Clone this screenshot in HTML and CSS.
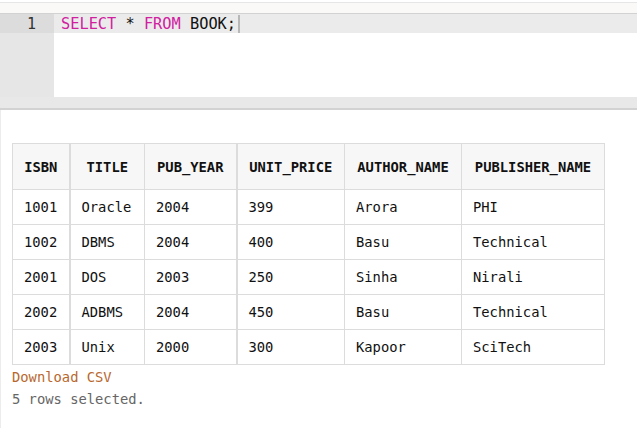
FILE: index.html
```html
<!DOCTYPE html>
<html>
<head>
<meta charset="utf-8">
<link rel="stylesheet" href="styles.css">
</head>
<body>
<div class="topbar"></div>
<div class="editor">
  <div class="gutter"><div class="ln active">1</div></div>
  <div class="code">
    <div class="line active"><span class="kw">SELECT</span> * <span class="kw">FROM</span> BOOK;<span class="cursor"></span></div>
  </div>
</div>
<div class="hscroll"></div>
<div class="results">
  <table class="grid">
    <colgroup>
      <col class="c1"><col class="c2"><col class="c3"><col class="c4"><col class="c5"><col class="c6">
    </colgroup>
    <thead>
      <tr><th>ISBN</th><th class="thick">TITLE</th><th>PUB_YEAR</th><th class="thick">UNIT_PRICE</th><th>AUTHOR_NAME</th><th>PUBLISHER_NAME</th></tr>
    </thead>
    <tbody>
      <tr><td>1001</td><td class="thick">Oracle</td><td>2004</td><td class="thick">399</td><td>Arora</td><td>PHI</td></tr>
      <tr><td>1002</td><td class="thick">DBMS</td><td>2004</td><td class="thick">400</td><td>Basu</td><td>Technical</td></tr>
      <tr><td>2001</td><td class="thick">DOS</td><td>2003</td><td class="thick">250</td><td>Sinha</td><td>Nirali</td></tr>
      <tr><td>2002</td><td class="thick">ADBMS</td><td>2004</td><td class="thick">450</td><td>Basu</td><td>Technical</td></tr>
      <tr><td>2003</td><td class="thick">Unix</td><td>2000</td><td class="thick">300</td><td>Kapoor</td><td>SciTech</td></tr>
    </tbody>
  </table>
  <div class="download">Download CSV</div>
  <div class="status">5 rows selected.</div>
</div>
</body>
</html>
```

FILE: styles.css
```css
html, body {
  margin: 0;
  padding: 0;
  background: #ffffff;
  width: 637px;
  height: 428px;
  overflow: hidden;
  font-family: "DejaVu Sans Mono", "Liberation Mono", monospace;
}
.topbar {
  height: 10px;
  margin-top: 2px;
  border-top: 1px solid #e6e6e6;
  border-bottom: 1px solid #d2d2d2;
  background: #faf9f8;
}
.editor {
  display: flex;
  height: 83px;
}
.gutter {
  width: 54px;
  background: #e6e6e6;
  flex: none;
}
.ln {
  height: 19px;
  line-height: 21px;
  font-size: 15px;
  color: #333;
  text-align: right;
  padding-right: 18px;
}
.ln.active { background: #dcdcdc; }
.code {
  flex: 1;
  background: #ffffff;
}
.line {
  height: 19px;
  font-size: 15.3px;
  color: #111;
  padding-left: 7px;
  white-space: pre;
  display: flex;
  align-items: center;
  padding-top: 1px;
  box-sizing: border-box;
}
.line.active { background: #ebebeb; }
.kw { color: #d020a0; }
.cursor {
  display: inline-block;
  width: 2px;
  height: 18px;
  background: #b8b8b8;
  margin-left: 2px;
}
.hscroll {
  height: 11px;
  background: #e8e8e8;
  border-bottom: 2px solid #d2d2d2;
}
.results {
  border-left: 1px solid #ececec;
  padding: 33px 0 0 11px;
  height: 285px;
}
.grid {
  border-collapse: collapse;
  table-layout: fixed;
  width: 592px;
  font-size: 13.8px;
  color: #111;
}
.c1 { width: 57px; }
.c2 { width: 75px; }
.c3 { width: 92px; }
.c4 { width: 108px; }
.c5 { width: 117px; }
.c6 { width: 143px; }
.grid th, .grid td {
  border: 1px solid #dcdcdc;
  white-space: nowrap;
  overflow: hidden;
}
.grid th {
  background: #f7f7f7;
  font-weight: bold;
  height: 45px;
  padding: 0 8px;
  text-align: center;
}
.grid td {
  height: 34px;
  padding: 0 11px;
  text-align: left;
}
.grid .thick { border-left: 2px solid #dcdcdc; }
.download {
  margin-top: 3px;
  font-size: 13.8px;
  color: #b8682e;
  line-height: 18px;
}
.status {
  margin-top: 4px;
  font-size: 13.8px;
  color: #666;
  line-height: 18px;
}
```
